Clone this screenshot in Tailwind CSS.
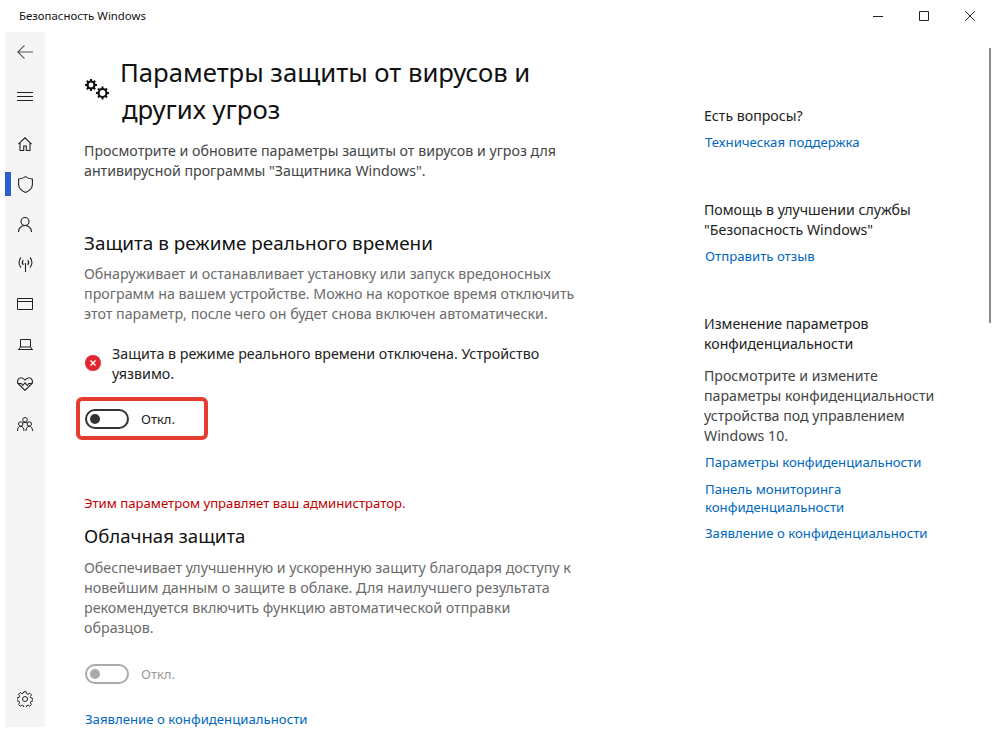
<!DOCTYPE html>
<html lang="ru">
<head>
<meta charset="utf-8">
<script src="https://cdn.jsdelivr.net/npm/@tailwindcss/browser@4"></script>
</head>
<body class="bg-white">
<div class="relative w-[998px] h-[732px] overflow-hidden bg-white text-black font-['Noto_Sans','Open_Sans',sans-serif] text-[14.250px] leading-[20px]">
  <header class="h-[32px] flex items-center justify-between pl-[19px]">
    <span class="text-[11.400px] text-[#111]">Безопасность Windows</span>
    <div class="flex items-center pr-[23px] gap-[36px]">
      <svg width="10" height="11" viewBox="0 0 10 11" fill="none" stroke="#222"><path d="M0 5.500h10"/></svg>
      <svg width="10" height="10" viewBox="0 0 10 10" fill="none" stroke="#222"><path d="M.5.500h9v9h-9z"/></svg>
      <svg width="10" height="10" viewBox="0 0 10 10" fill="none" stroke="#222"><path d="M.2.200l9.600 9.600M9.800.200l-9.600 9.600"/></svg>
    </div>
  </header>
  <div class="flex pl-[5px] h-[695px]">
    <nav class="w-[40px] h-full bg-[#f5f5f5] relative flex flex-col text-[#222] shrink-0">
      <div class="h-[40px] flex items-center justify-center"><svg width="16" height="14" viewBox="0 0 16 14" fill="none" stroke="#555" stroke-width="1.100"><path d="M16 7H1M7.500.4L.8 7l6.700 6.600"/></svg></div>
      <div class="mt-[4px] h-[40px] flex items-center justify-center"><svg width="16" height="9" viewBox="0 0 16 9" fill="none" stroke="#222"><path d="M0 .5h16M0 4.500h16M0 8.500h16"/></svg></div>
      <div class="mt-[8px] h-[40px] flex items-center justify-center"><svg width="14" height="14" viewBox="0 0 14 14" fill="none" stroke="#222" stroke-width="1.100"><path d="M.4 7.200L7 .8l6.600 6.400M2 5.800v7.700h3.700V9h2.600v4.500H12V5.800"/></svg></div>
      <div class="h-[40px] flex items-center justify-center"><svg width="15" height="17" viewBox="0 0 15 17" fill="none" stroke="#222" stroke-width="1.100"><path d="M7.500.6c2 1.500 4.300 2.300 6.900 2.400v5.500c0 3.700-3 6.300-6.900 7.900C3.600 14.800.6 12.200.6 8.500V3C3.200 2.900 5.500 2.100 7.500.6z"/></svg></div>
      <div class="h-[40px] flex items-center justify-center"><svg width="14" height="15" viewBox="0 0 14 15" fill="none" stroke="#222" stroke-width="1.100"><circle cx="7" cy="4.500" r="4"/><path d="M.5 15c0-3.600 2.700-6.500 6.500-6.500s6.500 2.900 6.500 6.500"/></svg></div>
      <div class="h-[40px] flex items-center justify-center"><svg width="15" height="15" viewBox="0 0 15 15" fill="none" stroke="#222" stroke-width="1.100"><path d="M7.500 6v9M3 .5C.4 3.200.4 7.800 3 10.500M12 .5c2.600 2.700 2.600 7.300 0 10M5.300 3c-1.200 1.400-1.200 3.600 0 5M9.700 3c1.200 1.400 1.200 3.600 0 5"/></svg></div>
      <div class="h-[40px] flex items-center justify-center"><svg width="16" height="12" viewBox="0 0 16 12" fill="none" stroke="#222"><path d="M.5.500h15v11H.500zM.5 3.500h15"/></svg></div>
      <div class="h-[40px] flex items-center justify-center"><svg width="15" height="11" viewBox="0 0 15 11" fill="none" stroke="#222"><path d="M2.500.5h10v7.500h-10zM0 10.500h15M.8 10.500l1.700-2.500M14.200 10.500l-1.700-2.500"/></svg></div>
      <div class="h-[40px] flex items-center justify-center"><svg width="16" height="14" viewBox="0 0 16 14" fill="none" stroke="#222" stroke-width="1.100"><path d="M8 13.300L1.500 7C-.5 4.700 1 .7 4 .7c2 0 3 1 4 2.300C9 1.700 10 .7 12 .7c3 0 4.500 4 2.500 6.300zM.2 6.500h4l1.500 2 2.300-2.600 2.300 2.600 1.500-2h4"/></svg></div>
      <div class="h-[40px] flex items-center justify-center"><svg width="16" height="14" viewBox="0 0 16 14" fill="none" stroke="#222"><circle cx="8" cy="2.800" r="2.300"/><circle cx="3.700" cy="7" r="2.200"/><circle cx="12.300" cy="7" r="2.200"/><path d="M.5 14c0-3 1.200-4.700 3.200-4.700S7 11 7 14M9 14c0-3 1.300-4.700 3.300-4.700s3.200 1.700 3.200 4.700M5.500 6.200c1.300-1 3.700-1 5 0"/></svg></div>
      <div class="mt-auto mb-[8px] h-[40px] flex items-center justify-center"><svg width="16" height="16" viewBox="0 0 16 16" fill="none" stroke="#222"><circle cx="8" cy="8" r="2.500"/><path d="M6.800.7h2.400l.4 2 1.500.6 1.700-1.100 1.700 1.700-1.100 1.700.6 1.500 2 .4v2.400l-2 .4-.6 1.500 1.100 1.700-1.700 1.700-1.700-1.100-1.500.6-.4 2H6.800l-.4-2-1.500-.6-1.700 1.100-1.700-1.700 1.100-1.700-.6-1.500-2-.4V6.800l2-.4.6-1.500-1.100-1.700 1.700-1.700 1.700 1.100 1.500-.6z"/></svg></div>
      <span class="absolute left-0 top-[140px] w-[6px] h-[24px] bg-[#2b5fcc]"></span>
    </nav>
    <main class="pl-[39px] pt-[22px] w-[620px] shrink-0">
      <div class="flex items-start">
        <svg class="mt-[24px] mr-[10px] shrink-0" width="26" height="22" viewBox="0 0 26 22" fill="none" stroke="#111"><circle cx="7" cy="7" r="3.500" stroke-width="2.200"/><path d="M7 1v3M7 10v3M1 7h3M10 7h3M2.800 2.800l2 2M9.200 9.200l2 2M2.800 11.200l2-2M9.200 4.800l2-2" stroke-width="2"/><circle cx="18.500" cy="15" r="4" stroke-width="2.200"/><path d="M18.500 8.500v3M18.500 18.500v3M12 15h3M22 15h3M14 10.500l2 2M21 17.500l2 2M14 19.500l2-2M21 12.500l2-2" stroke-width="2"/></svg>
        <h1 class="text-[25.700px] leading-[37px] text-[#111] whitespace-nowrap">Параметры защиты от вирусов и<br><span class="ml-[2px]">других угроз</span></h1>
      </div>
      <p class="mt-[13px] text-[14.200px] text-[#444] whitespace-nowrap">Просмотрите и обновите параметры защиты от вирусов и угроз для<br>антивирусной программы "Защитника Windows".</p>
      <h2 class="mt-[50px] text-[18.900px] leading-[24px] text-[#111]">Защита в режиме реального времени</h2>
      <p class="mt-[9px] text-[#6b6b6b] whitespace-nowrap">Обнаруживает и останавливает установку или запуск вредоносных<br>программ на вашем устройстве. Можно на короткое время отключить<br>этот параметр, после чего он будет снова включен автоматически.</p>
      <div class="mt-[20px] flex items-start">
        <span class="ml-[1px] mt-[11px] w-[16px] h-[16px] rounded-full bg-[#e02633] flex items-center justify-center mr-[11px]">
          <svg width="6" height="6" viewBox="0 0 6 6" stroke="#fff" stroke-width="1.400"><path d="M.5.500l5 5M5.500.500l-5 5"/></svg>
        </span>
        <p class="whitespace-nowrap text-[#222]">Защита в режиме реального времени отключена. Устройство<br>уязвимо.</p>
      </div>
      <div class="ml-[-8px] mt-[13px] w-[132px] h-[43px] pt-[1px] border-[4px] border-[#e53c31] rounded-[6px] flex items-center pl-[5px]">
        <span class="w-[44px] h-[20px] rounded-full border-2 border-[#333] flex items-center pl-[3px]"><span class="w-[10px] h-[10px] rounded-full bg-[#333]"></span></span>
        <span class="ml-[12px] text-[13px] text-[#222]">Откл.</span>
      </div>
      <p class="mt-[53px] text-[13.150px] text-[#c00000] whitespace-nowrap">Этим параметром управляет ваш администратор.</p>
      <h2 class="mt-[11px] text-[18.600px] leading-[24px] text-[#111]">Облачная защита</h2>
      <p class="mt-[10px] text-[#6b6b6b] whitespace-nowrap">Обеспечивает улучшенную и ускоренную защиту благодаря доступу к<br>новейшим данным о защите в облаке. Для наилучшего результата<br>рекомендуется включить функцию автоматической отправки<br>образцов.</p>
      <div class="mt-[26px] ml-[1px] flex items-center">
        <span class="w-[44px] h-[20px] rounded-full border-2 border-[#aaa] flex items-center pl-[3px]"><span class="w-[10px] h-[10px] rounded-full bg-[#aaa]"></span></span>
        <span class="ml-[12px] text-[13px] text-[#999]">Откл.</span>
      </div>
      <a class="block mt-[25px] ml-[1px] text-[13.200px] text-[#0067c0]">Заявление о конфиденциальности</a>
    </main>
    <aside class="pl-[39px] pt-[74px] w-[300px] text-[14.150px] text-[#444]">
      <h3 class="text-[#222]">Есть вопросы?</h3>
      <a class="block mt-[6px] ml-[1px] text-[13.200px] text-[#0067c0]">Техническая поддержка</a>
      <h3 class="mt-[48px] text-[#222] whitespace-nowrap">Помощь в улучшении службы<br>"Безопасность Windows"</h3>
      <a class="block mt-[6px] ml-[1px] text-[13.200px] text-[#0067c0]">Отправить отзыв</a>
      <h3 class="mt-[48px] text-[#222] whitespace-nowrap">Изменение параметров<br>конфиденциальности</h3>
      <p class="mt-[12px] whitespace-nowrap">Просмотрите и измените<br>параметры конфиденциальности<br>устройства под управлением<br>Windows 10.</p>
      <a class="block mt-[6px] ml-[1px] text-[13.200px] text-[#0067c0] whitespace-nowrap">Параметры конфиденциальности</a>
      <a class="block mt-[8px] ml-[1px] text-[13.200px] leading-[18px] text-[#0067c0] whitespace-nowrap">Панель мониторинга<br>конфиденциальности</a>
      <a class="block mt-[7px] ml-[1px] text-[13.200px] text-[#0067c0] whitespace-nowrap">Заявление о конфиденциальности</a>
    </aside>
  </div>
  <span class="absolute left-[989px] top-[48px] w-[2px] h-[275px] bg-[#8a8a8a]"></span>
</div>
</body>
</html>
